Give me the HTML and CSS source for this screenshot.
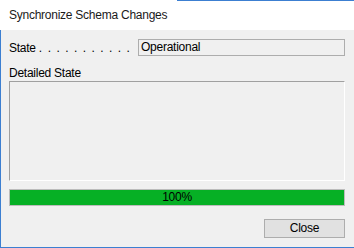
FILE: index.html
```html
<!DOCTYPE html>
<html>
<head>
<meta charset="utf-8">
<link rel="stylesheet" href="styles.css">
</head>
<body>
<div class="window">
  <div class="titlebar">Synchronize Schema Changes</div>
  <div class="content">
    <div class="state-row">
      <span class="state-label">State <span class="dots">. . . . . . . . . . .</span></span>
      <div class="state-box">Operational</div>
    </div>
    <div class="detail-label">Detailed State</div>
    <div class="detail-box"></div>
    <div class="progress">
      <div class="progress-fill" style="width:100%"></div>
      <span class="progress-text">100%</span>
    </div>
    <div class="footer">
      <button class="btn">Close</button>
    </div>
  </div>
</div>
</body>
</html>
```
FILE: styles.css
```css
* { box-sizing: border-box; }
html, body { margin: 0; padding: 0; }
body {
  width: 354px;
  height: 248px;
  overflow: hidden;
  font-family: "Liberation Sans", Arial, sans-serif;
  font-size: 12px;
  letter-spacing: -0.25px;
  color: #000;
  background: #f0f0f0;
}
.window {
  width: 354px;
  height: 248px;
  display: flex;
  flex-direction: column;
}
.titlebar {
  height: 30px;
  flex: none;
  background: #fff linear-gradient(to right, transparent 177px, #3c7fd1 177px) top left / 100% 1px no-repeat;
  padding-left: 9px;
  line-height: 31px;
  font-size: 12px;
  color: #1a1a1a;
}
.content {
  flex: 1;
  background: #f0f0f0;
  border-left: 1px solid #3c7fd1;
  border-bottom: 1px solid #3c7fd1;
  padding: 9px 9px 0 8px;
  display: flex;
  flex-direction: column;
}
.state-row {
  display: flex;
  align-items: center;
  height: 17px;
}
.state-label {
  width: 129px;
  flex: none;
  white-space: pre;
}
.dots {
  word-spacing: 2.6px;
}
.state-box {
  flex: 1;
  height: 17px;
  border: 1px solid #adadad;
  background: #f0f0f0;
  padding-left: 2px;
  line-height: 15px;
}
.detail-label {
  margin-top: 9px;
  height: 16px;
  line-height: 16px;
}
.detail-box {
  height: 100px;
  border-top: 1px solid #a0a0a0;
  border-left: 1px solid #a0a0a0;
  border-right: 1px solid #fff;
  border-bottom: 1px solid #fff;
  background: #f0f0f0;
}
.progress {
  margin-top: 8px;
  height: 17px;
  border: 1px solid #bcbcbc;
  background: #e6e6e6;
  position: relative;
}
.progress-fill {
  height: 100%;
  background: #06b025;
}
.progress-text {
  position: absolute;
  left: 0;
  right: 0;
  top: 0;
  line-height: 15px;
  text-align: center;
}
.footer {
  margin-top: 13px;
  display: flex;
  justify-content: flex-end;
}
.btn {
  width: 81px;
  height: 19px;
  border: 1px solid #adadad;
  background: #e1e1e1;
  font-family: inherit;
  font-size: 12px;
  letter-spacing: -0.25px;
  color: #000;
  padding: 0;
  line-height: 17px;
}
```
